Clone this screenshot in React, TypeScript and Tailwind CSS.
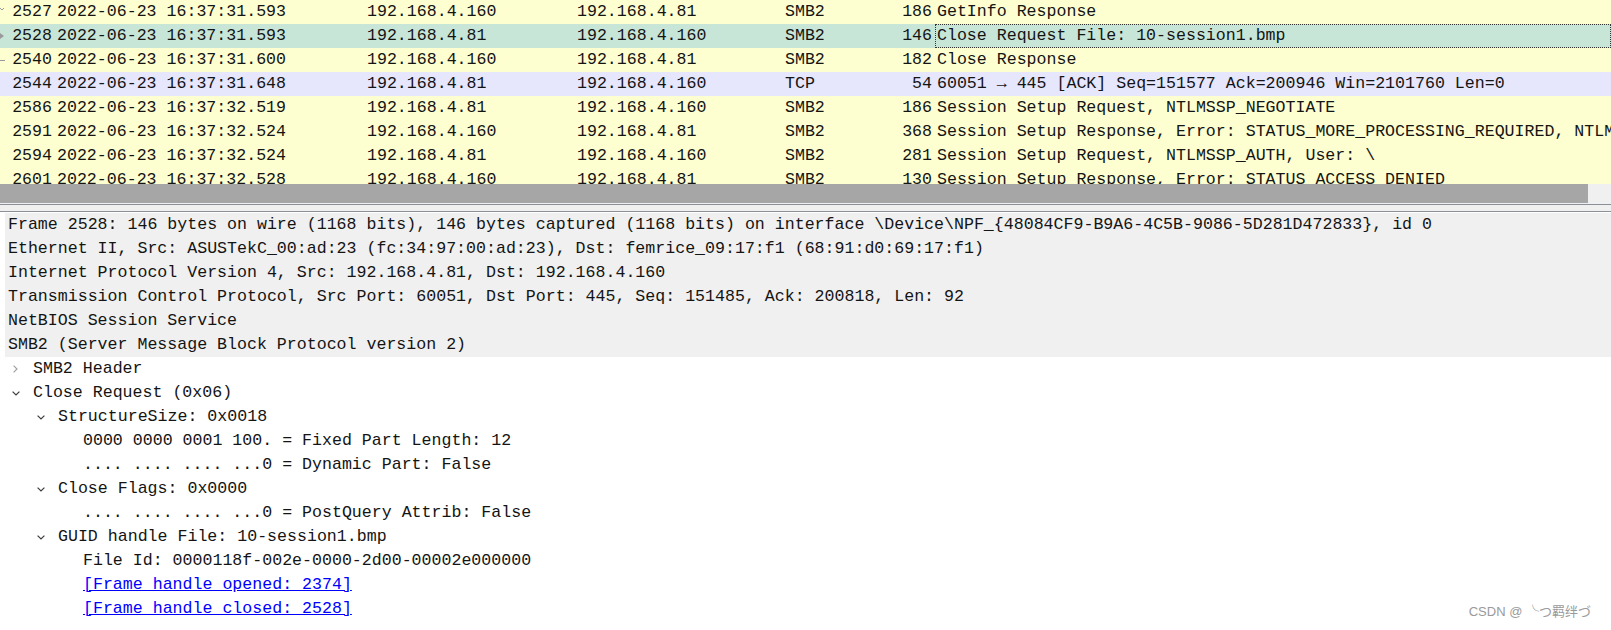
import React from "react";

type Packet = {
  no: string;
  time: string;
  src: string;
  dst: string;
  proto: string;
  len: string;
  info: string;
  bg: string;
  mark?: "first" | "selected" | "mid";
  focus?: boolean;
};

const packets: Packet[] = [
  { no: "2527", time: "2022-06-23 16:37:31.593", src: "192.168.4.160", dst: "192.168.4.81", proto: "SMB2", len: "186", info: "GetInfo Response", bg: "bg-[#feffd0]", mark: "first" },
  { no: "2528", time: "2022-06-23 16:37:31.593", src: "192.168.4.81", dst: "192.168.4.160", proto: "SMB2", len: "146", info: "Close Request File: 10-session1.bmp", bg: "bg-[#c8e6d8]", mark: "selected", focus: true },
  { no: "2540", time: "2022-06-23 16:37:31.600", src: "192.168.4.160", dst: "192.168.4.81", proto: "SMB2", len: "182", info: "Close Response", bg: "bg-[#feffd0]", mark: "mid" },
  { no: "2544", time: "2022-06-23 16:37:31.648", src: "192.168.4.81", dst: "192.168.4.160", proto: "TCP", len: "54", info: "60051 → 445 [ACK] Seq=151577 Ack=200946 Win=2101760 Len=0", bg: "bg-[#e6e6fd]" },
  { no: "2586", time: "2022-06-23 16:37:32.519", src: "192.168.4.81", dst: "192.168.4.160", proto: "SMB2", len: "186", info: "Session Setup Request, NTLMSSP_NEGOTIATE", bg: "bg-[#feffd0]" },
  { no: "2591", time: "2022-06-23 16:37:32.524", src: "192.168.4.160", dst: "192.168.4.81", proto: "SMB2", len: "368", info: "Session Setup Response, Error: STATUS_MORE_PROCESSING_REQUIRED, NTLMSSP_CHALLENGE", bg: "bg-[#feffd0]" },
  { no: "2594", time: "2022-06-23 16:37:32.524", src: "192.168.4.81", dst: "192.168.4.160", proto: "SMB2", len: "281", info: "Session Setup Request, NTLMSSP_AUTH, User: \\", bg: "bg-[#feffd0]" },
  { no: "2601", time: "2022-06-23 16:37:32.528", src: "192.168.4.160", dst: "192.168.4.81", proto: "SMB2", len: "130", info: "Session Setup Response, Error: STATUS_ACCESS_DENIED", bg: "bg-[#feffd0]" },
];

const summary = [
  "Frame 2528: 146 bytes on wire (1168 bits), 146 bytes captured (1168 bits) on interface \\Device\\NPF_{48084CF9-B9A6-4C5B-9086-5D281D472833}, id 0",
  "Ethernet II, Src: ASUSTekC_00:ad:23 (fc:34:97:00:ad:23), Dst: femrice_09:17:f1 (68:91:d0:69:17:f1)",
  "Internet Protocol Version 4, Src: 192.168.4.81, Dst: 192.168.4.160",
  "Transmission Control Protocol, Src Port: 60051, Dst Port: 445, Seq: 151485, Ack: 200818, Len: 92",
  "NetBIOS Session Service",
  "SMB2 (Server Message Block Protocol version 2)",
];

type TreeRow = {
  text: string;
  level: number;
  arrow?: "open" | "closed";
  link?: boolean;
};

const tree: TreeRow[] = [
  { text: "SMB2 Header", level: 0, arrow: "closed" },
  { text: "Close Request (0x06)", level: 0, arrow: "open" },
  { text: "StructureSize: 0x0018", level: 1, arrow: "open" },
  { text: "0000 0000 0001 100. = Fixed Part Length: 12", level: 2 },
  { text: ".... .... .... ...0 = Dynamic Part: False", level: 2 },
  { text: "Close Flags: 0x0000", level: 1, arrow: "open" },
  { text: ".... .... .... ...0 = PostQuery Attrib: False", level: 2 },
  { text: "GUID handle File: 10-session1.bmp", level: 1, arrow: "open" },
  { text: "File Id: 0000118f-002e-0000-2d00-00002e000000", level: 2 },
  { text: "[Frame handle opened: 2374]", level: 2, link: true },
  { text: "[Frame handle closed: 2528]", level: 2, link: true },
];

const indent = ["pl-[3px]", "pl-[28px]", "pl-[53px]"];

const Mark = ({ kind }: { kind?: Packet["mark"] }) => {
  if (!kind) return null;
  return (
    <svg className="absolute left-0 top-0" width="6" height="24" viewBox="0 0 6 24">
      {kind === "first" && <polyline points="0,8 2,10 4,8" fill="none" stroke="#9a9a9a" strokeWidth="1" />}
      {kind === "selected" && <polygon points="0,9 4,12 0,15" fill="#9a9a9a" />}
      {kind === "mid" && <line x1="0" y1="12.5" x2="5" y2="12.5" stroke="#9a9a9a" strokeWidth="1" />}
    </svg>
  );
};

const Chevron = ({ open }: { open: boolean }) =>
  open ? (
    <svg className="ml-[4px]" width="8" height="5" viewBox="0 0 8 5">
      <polyline points="0.6,0.6 4,4 7.4,0.6" fill="none" stroke="#3c3c3c" strokeWidth="1.2" />
    </svg>
  ) : (
    <svg className="ml-[5px]" width="5" height="8" viewBox="0 0 5 8">
      <polyline points="0.6,0.6 4,4 0.6,7.4" fill="none" stroke="#a0a0a0" strokeWidth="1.2" />
    </svg>
  );

export default function App() {
  return (
    <div className="relative w-[1611px] h-[630px] overflow-hidden bg-white text-[#141414] font-['Liberation_Mono','DejaVu_Sans_Mono',monospace] text-[16.6px]">
      {/* packet list */}
      <div className="h-[184px] overflow-hidden">
        {packets.map((p) => (
          <div key={p.no} className={`relative flex h-6 items-center whitespace-nowrap ${p.bg}`}>
            <Mark kind={p.mark} />
            <div className="w-[52px] text-right">{p.no}</div>
            <div className="ml-[5px] w-[310px]">{p.time}</div>
            <div className="w-[210px]">{p.src}</div>
            <div className="w-[208px]">{p.dst}</div>
            <div className="w-[80px]">{p.proto}</div>
            <div className="w-[67px] text-right">{p.len}</div>
            <div
              className={`ml-[3px] flex h-6 flex-1 items-center overflow-hidden pl-[2px] ${
                p.focus ? "outline-1 -outline-offset-1 outline-dotted outline-[#333]" : ""
              }`}
            >
              {p.info}
            </div>
          </div>
        ))}
      </div>

      {/* horizontal scrollbar */}
      <div className="flex h-[19px]">
        <div className="w-[1588px] bg-[#a6a6a6]" />
        <div className="flex-1 bg-[#f0f0f0]" />
      </div>

      {/* splitter */}
      <div className="h-[9px] bg-[#f0f0f0] pt-px">
        <div className="h-[8px] border-y border-[#8b9098]" />
      </div>

      {/* packet details */}
      <div className="ml-[5px] pt-px">
        {summary.map((s) => (
          <div key={s} className="flex h-6 items-center whitespace-nowrap bg-[#f0f0f0] pl-[3px]">
            {s}
          </div>
        ))}
        {tree.map((r) => (
          <div key={r.text} className={`flex h-6 items-center whitespace-nowrap ${indent[r.level]}`}>
            <div className="flex w-[25px] items-center">
              {r.arrow && <Chevron open={r.arrow === "open"} />}
            </div>
            {r.link ? <span className="text-[#0000ff] underline">{r.text}</span> : <span>{r.text}</span>}
          </div>
        ))}
      </div>

      <div className="absolute bottom-[9px] right-[20px] text-[13px] text-[#9a9a9a] font-['Liberation_Sans','Noto_Sans_CJK_SC',sans-serif]">
        CSDN @ ╰つ羁绊づ
      </div>
    </div>
  );
}
